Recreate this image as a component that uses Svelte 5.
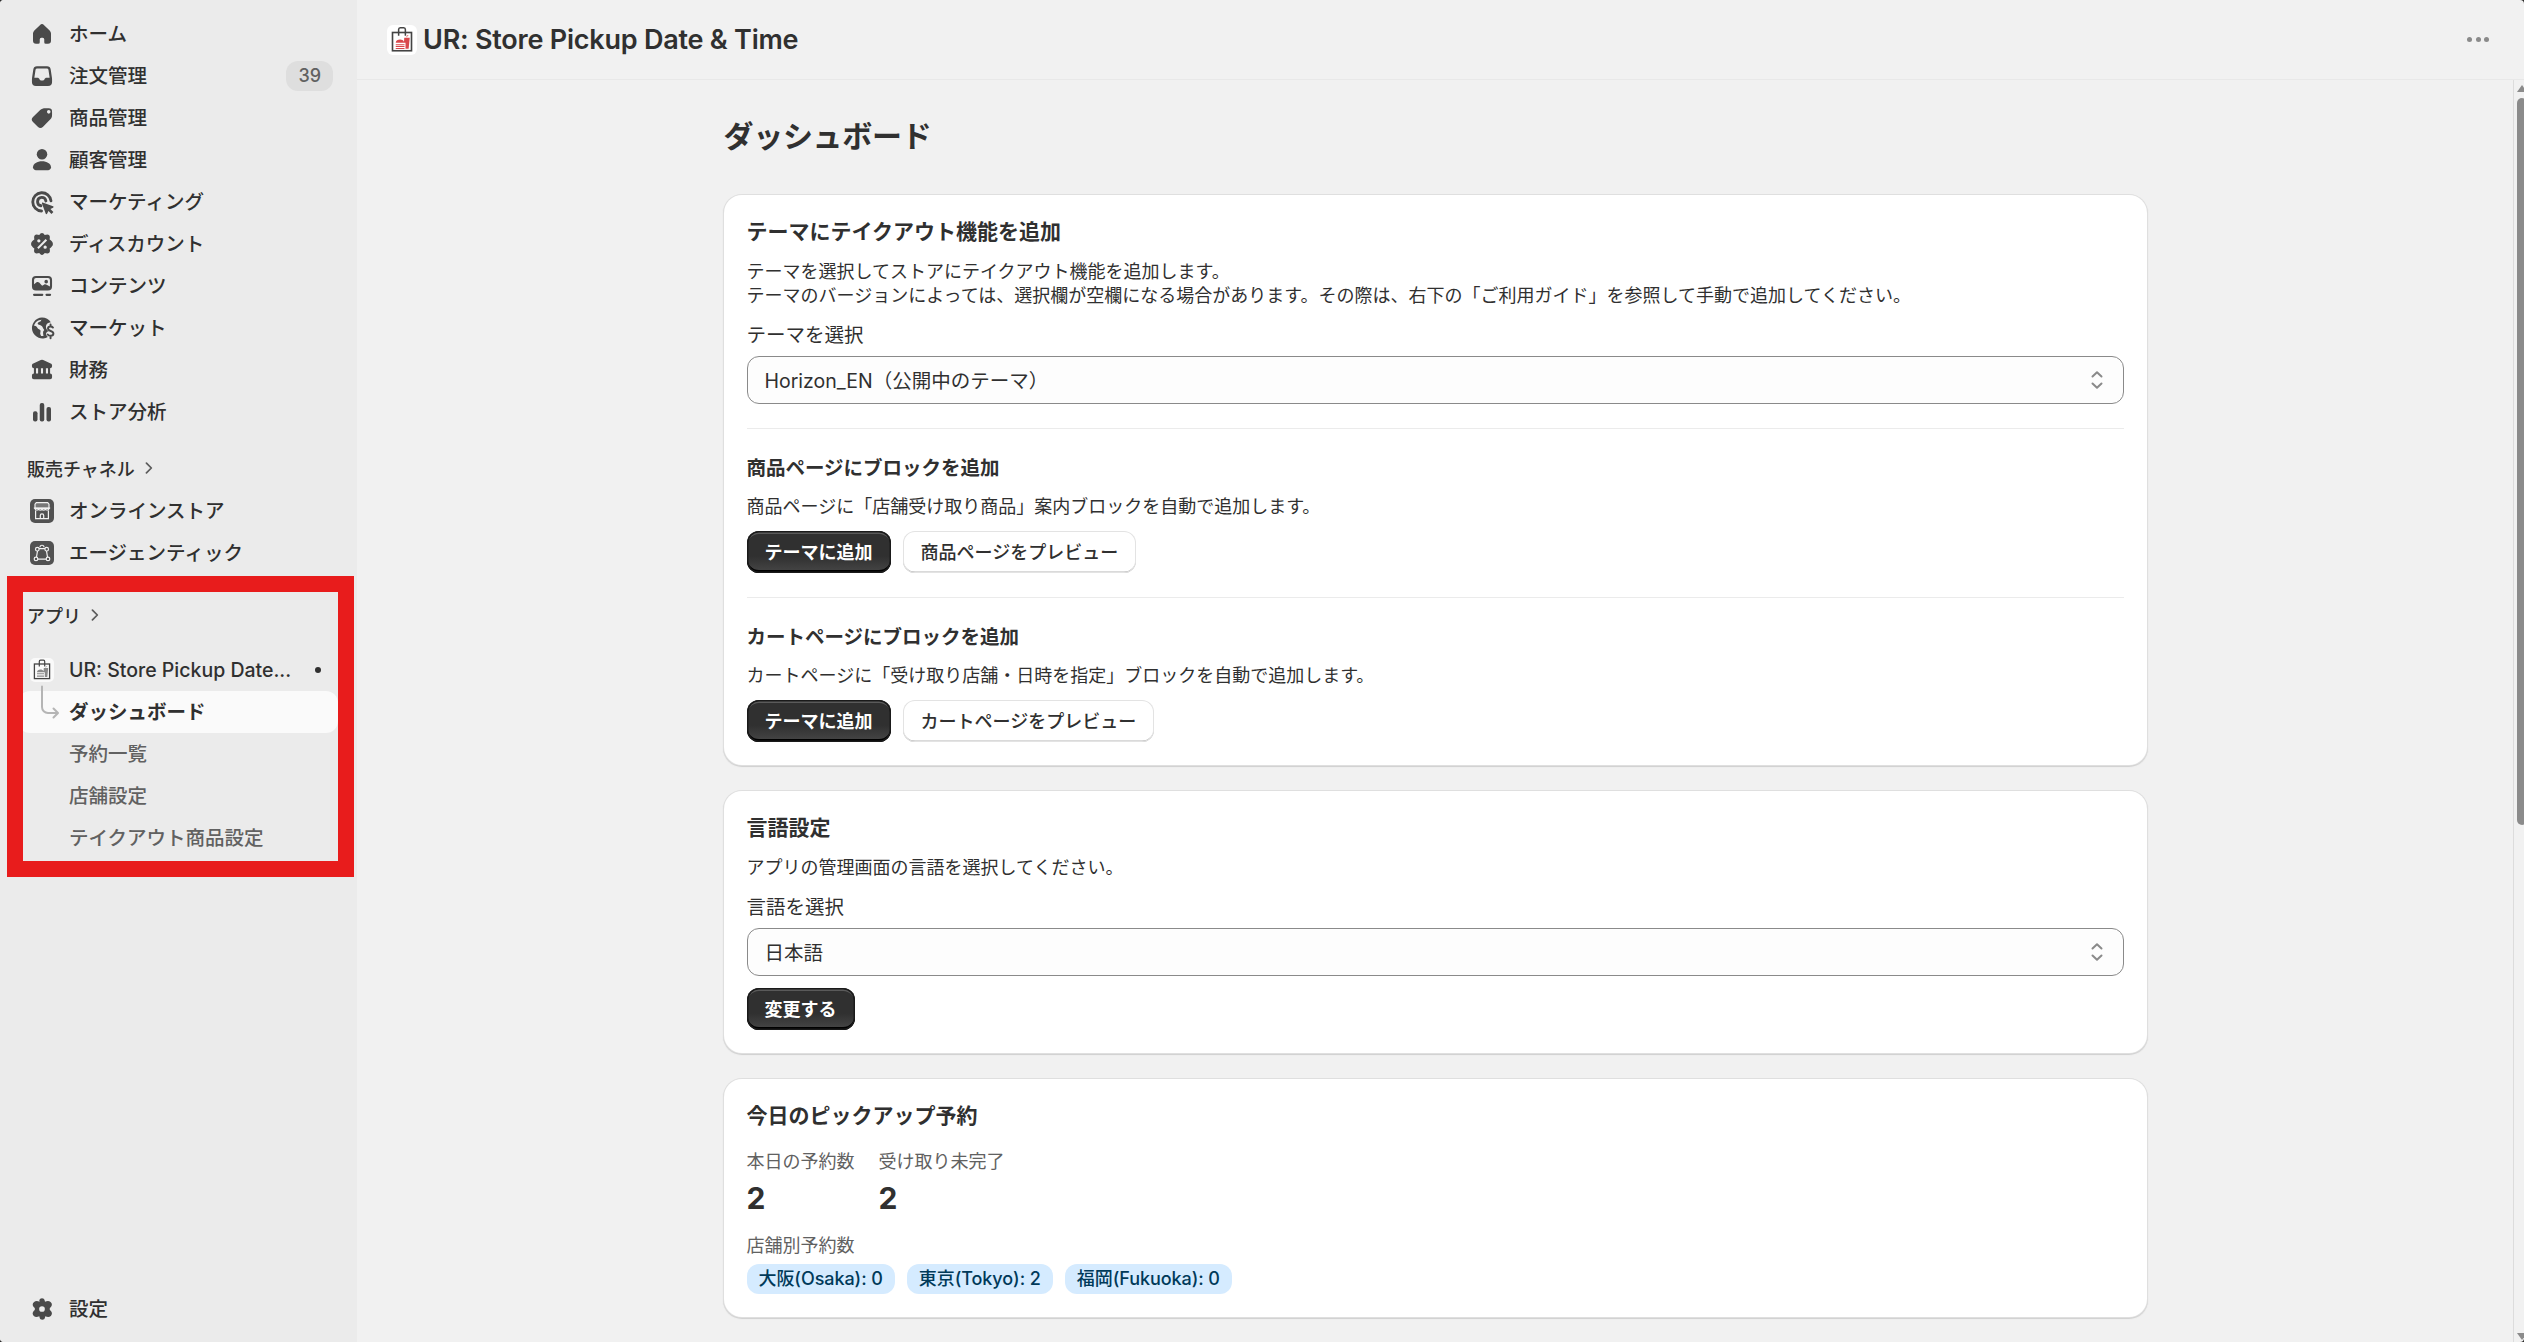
<script lang="ts">
  interface NavItem {
    label: string;
    icon: string;
    badge?: string;
  }

  interface BlockSection {
    title: string;
    text: string;
    preview: string;
  }

  // 20x20 glyphs, painted with currentColor
  const icons: Record<string, string> = {
    home: `<path fill-rule="evenodd" d="M8.6 4.1a2 2 0 0 1 2.8 0l3.7 3.5c.6.6.9 1.3.9 2.1v4.8a2 2 0 0 1-2 2h-1.5a1 1 0 0 1-1-1v-2a1 1 0 0 0-1-1h-1a1 1 0 0 0-1 1v2a1 1 0 0 1-1 1H6a2 2 0 0 1-2-2V9.700c0-.8.3-1.5.9-2.100z"/>`,
    orders: `<path fill-rule="evenodd" d="M6.700 3.500h6.600a2.500 2.500 0 0 1 2.500 2.100l.9 6v2.400a2.700 2.700 0 0 1-2.700 2.700H6a2.700 2.700 0 0 1-2.700-2.700v-2.400l.9-6a2.500 2.500 0 0 1 2.500-2.100zm.1 1.500c-.6 0-1 .4-1.100.9l-.8 5.200h2c.6 0 1 .3 1.300.8l.3.6c.2.400.5.500.9.500h1.200c.4 0 .7-.1.900-.5l.3-.6c.3-.5.7-.8 1.300-.8h2l-.8-5.200c-.1-.5-.5-.9-1.100-.9z"/>`,
    products: `<path fill-rule="evenodd" d="M12.200 3.500h2.300a2.200 2.200 0 0 1 2.200 2.200v2.600c0 1-.4 1.900-1.100 2.600l-4.900 4.900a2.500 2.500 0 0 1-3.500 0L4 12.700a2.300 2.300 0 0 1 0-3.300l4.800-4.700c.9-.8 2-1.200 3.400-1.200zm2.300 3.600a1.200 1.200 0 1 0 0-2.400 1.200 1.200 0 0 0 0 2.400z"/>`,
    customers: `<circle cx="10" cy="6.200" r="3.500"/><path d="M4 14.900c0-2.400 2.800-4 6-4s6 1.600 6 4c0 1.200-.9 1.900-2 1.900H6c-1.100 0-2-.7-2-1.900z"/>`,
    marketing: `<path d="M16 9.200A6.100 6.100 0 1 0 9.700 16" fill="none" stroke="currentColor" stroke-width="1.900" stroke-linecap="round"/><path d="M12.600 9.300a2.800 2.800 0 1 0-3.300 3.200" fill="none" stroke="currentColor" stroke-width="1.900" stroke-linecap="round"/><path d="M10.400 10.400l7 2.500c.4.200.4.700 0 .9l-1.800.9 2 2-1.300 1.300-2-2-.9 1.800c-.2.400-.7.400-.9 0l-2.600-7c-.1-.3.200-.5.500-.4z"/>`,
    discounts: `<path fill-rule="evenodd" d="M10 2.700c.8 0 1.300.6 1.800 1.300.9-.2 2.300-.6 3 .1s.4 1.800.3 2.900c.9.600 2.200 1.700 2.200 3s-1.300 2.300-2.200 3c.2 1 .4 2.200-.3 2.900s-2 .4-3 .1c-.5.700-1 1.300-1.800 1.300s-1.300-.6-1.800-1.300c-1 .3-2.300.6-3-.1s-.5-1.900-.3-2.900c-.9-.7-2.200-1.700-2.200-3s1.300-2.400 2.200-3c-.1-1.100-.4-2.200.3-2.900s2.100-.3 3-.1c.5-.7 1-1.300 1.800-1.300zM7.900 6.800a1.100 1.100 0 1 0 0 2.200 1.100 1.100 0 0 0 0-2.200zm4.200 4.200a1.100 1.100 0 1 0 0 2.200 1.100 1.100 0 0 0 0-2.200zm.3-4.300-5.600 5.700.9.900 5.700-5.600z"/>`,
    content: `<path fill-rule="evenodd" d="M6 3.300h8a2.700 2.700 0 0 1 2.700 2.700v4.300a2.700 2.700 0 0 1-2.700 2.700H6a2.700 2.700 0 0 1-2.700-2.700V6A2.700 2.700 0 0 1 6 3.300zM6 4.700A1.300 1.300 0 0 0 4.700 6v2.900l1.500-1.300c.6-.5 1.400-.4 1.900.1l2 2.200 1.200-.8c.6-.4 1.300-.3 1.800.1l2.200 1.200V6A1.300 1.300 0 0 0 14 4.700z"/><circle cx="12.800" cy="7.100" r="1.200"/><path d="M4.700 15.900h5.500M13 15.900h2.400" fill="none" stroke="currentColor" stroke-width="1.400" stroke-linecap="round"/>`,
    markets: `<path fill-rule="evenodd" d="M10 3c2.500 0 4.600 1.200 5.900 3.200-1.900.1-3.300 1.300-3.300 3 0 1.500.9 2.400 2 2.900-.9.100-1.900.8-1.900 1.800s.6 1.600 1.200 2.100A7 7 0 1 1 10 3zm-.2 1.500C7.300 4.600 5.300 6.200 4.700 8.500c1.300-.1 2 .6 2.300 1.500.3.800 1.700.7 2 1.700.2.800-.4 1.600-.1 2.400l.5 1.300h1.600c-.3-1.700-.6-2.900.5-4-1.200-1.400-.9-2.400-2.200-3-.9-.5-1.800-.3-2.100-1-.3-.8.500-1.300 1.200-1.500.9-.3.800-.9 1.400-1.400z"/><path d="M17.300 9.700c-.4-.5-.9-.7-1.600-.7-1.100 0-1.700.6-1.700 1.400 0 2 3.600 1.200 3.600 3.300 0 .9-.8 1.500-1.900 1.500-.8 0-1.500-.3-1.900-.9M15.700 7.700V9M15.700 15.400v1.400" fill="none" stroke="currentColor" stroke-width="1.300" stroke-linecap="round"/>`,
    finance: `<path fill-rule="evenodd" d="M9.200 3.400a2 2 0 0 1 1.600 0l5 2.200c.6.3.9.700.9 1.300v.6c0 .8-.6 1.300-1.300 1.300v3.500c.8 0 1.300.6 1.300 1.300v1.300c0 .8-.5 1.300-1.300 1.300H4.600c-.8 0-1.300-.5-1.300-1.300v-1.300c0-.7.5-1.300 1.300-1.300V8.800c-.7 0-1.300-.5-1.300-1.300v-.6c0-.6.300-1 .9-1.300zM6 8.800v3.500h1.400V8.800zm3.300 0v3.500h1.400V8.800zm3.300 0v3.500H14V8.800z"/>`,
    analytics: `<rect x="4" y="9.500" width="3" height="6.800" rx="1.300"/><rect x="8.500" y="4" width="3" height="12.300" rx="1.300"/><rect x="13" y="6.700" width="3" height="9.600" rx="1.300"/>`,
    settings: `<path fill-rule="evenodd" d="M8.200 4.300c.2-.9.900-1.500 1.800-1.500s1.600.6 1.800 1.500l.2.900c1.200-.5 2.500-.9 3.700.2 1.300 1.200 1.100 2.400.1 3.400l-.6.600v1.200l.6.600c1 1 1.200 2.200.1 3.400-1.200 1.100-2.500.7-3.700.2l-.2.900c-.2.900-.9 1.500-1.800 1.500s-1.600-.6-1.800-1.500l-.2-.9c-1.200.5-2.500.9-3.700-.2-1.100-1.200-.9-2.400.1-3.400l.6-.6V9.400l-.6-.6c-1-1-1.200-2.200.1-3.400C5.900 4.300 7.200 4.700 8.400 5.200zM10 8.100a1.900 1.900 0 1 0 0 3.800 1.900 1.900 0 0 0 0-3.800z"/>`,
  };

  // 24x24 tiles with light line art
  const channelIcons: Record<string, string> = {
    store: `<path d="M6.300 3.600h11.400l1.300 1.500v4.200H5V5.100z" fill="#777"/><path d="M3.800 9h16.400M5 9.500c0 2 3.500 2 3.500.2 0 1.800 3.500 1.800 3.500 0 0 1.800 3.500 1.800 3.500 0 0 1.800 3.500 1.800 3.500-.2M5.600 11.500v8.200h12.800v-8.200M10.300 19.500v-3c0-2.200 3.400-2.200 3.400 0v3"/>`,
    agentic: `<path d="M7.500 9.800 6.500 16M16.500 9.800l1 6.200M8 18.100h8M9 7.700h6"/><path d="M10 6.200c0-2.600 4-2.600 4 0"/><g fill="#525252"><circle cx="7.300" cy="8.200" r="1.800"/><circle cx="16.700" cy="8.200" r="1.800"/><circle cx="6" cy="17.900" r="1.800"/><circle cx="18" cy="17.900" r="1.800"/></g>`,
  };

  const navItems: NavItem[] = [
    { label: "ホーム", icon: "home" },
    { label: "注文管理", icon: "orders", badge: "39" },
    { label: "商品管理", icon: "products" },
    { label: "顧客管理", icon: "customers" },
    { label: "マーケティング", icon: "marketing" },
    { label: "ディスカウント", icon: "discounts" },
    { label: "コンテンツ", icon: "content" },
    { label: "マーケット", icon: "markets" },
    { label: "財務", icon: "finance" },
    { label: "ストア分析", icon: "analytics" },
  ];

  const channels: NavItem[] = [
    { label: "オンラインストア", icon: "store" },
    { label: "エージェンティック", icon: "agentic" },
  ];

  const appPages = [
    "ダッシュボード",
    "予約一覧",
    "店舗設定",
    "テイクアウト商品設定",
  ];

  const blocks: BlockSection[] = [
    {
      title: "商品ページにブロックを追加",
      text: "商品ページに「店舗受け取り商品」案内ブロックを自動で追加します。",
      preview: "商品ページをプレビュー",
    },
    {
      title: "カートページにブロックを追加",
      text: "カートページに「受け取り店舗・日時を指定」ブロックを自動で追加します。",
      preview: "カートページをプレビュー",
    },
  ];

  const stats = [
    { label: "本日の予約数", value: 2 },
    { label: "受け取り未完了", value: 2 },
  ];

  const stores = ["大阪(Osaka): 0", "東京(Tokyo): 2", "福岡(Fukuoka): 0"];

  let activePage = $state("ダッシュボード");
</script>

{#snippet appLogo(accent: string)}
  <svg viewBox="0 0 24 24" fill="none">
    <rect x="4.400" y="6" width="15.200" height="14.600" stroke="#444" stroke-width="1.300" />
    <path d="M9.300 8.600V3.500c0-.9.500-1.400 1.300-1.400h2.800c.8 0 1.300.5 1.300 1.400v5.100" stroke="#444" stroke-width="1.200" />
    <path
      d="M7 14.200c0-3 5.500-3.500 6.600-.9l.2-3.200h4.400l-.9 8.900h-2.500V14.200zM7 15.300h7v.8H7zM7 16.800h7v.8H7zM7 18.300h7v.8H7zM15.400 10l.5-1.600 1.500-.4"
      fill={accent}
    />
  </svg>
{/snippet}

{#snippet chevron()}
  <svg class="chevron" viewBox="0 0 12 12">
    <path d="M3.800 1.800 8 6l-4.200 4.200" />
  </svg>
{/snippet}

{#snippet select(value: string)}
  <button class="select">
    <span>{value}</span>
    <svg viewBox="0 0 14 20">
      <path d="M2.500 6.500 7 2.200l4.500 4.300M2.500 13.500 7 17.800l4.500-4.300" />
    </svg>
  </button>
{/snippet}

<div class="app">
  <aside class="sidebar">
    <nav>
      {#each navItems as item}
        <button class="nav-item">
          <svg class="nav-icon" viewBox="0 0 20 20" fill="currentColor">{@html icons[item.icon]}</svg>
          <span class="nav-label">{item.label}</span>
          {#if item.badge}
            <span class="count">{item.badge}</span>
          {/if}
        </button>
      {/each}

      <div class="nav-heading">販売チャネル {@render chevron()}</div>
      {#each channels as item}
        <button class="nav-item">
          <span class="tile">
            <svg viewBox="0 0 24 24">{@html channelIcons[item.icon]}</svg>
          </span>
          <span class="nav-label">{item.label}</span>
        </button>
      {/each}

      <div class="nav-heading apps">アプリ {@render chevron()}</div>
      <button class="nav-item app-item">
        <span class="tile light">{@render appLogo("#8a8a8a")}</span>
        <span class="nav-label">UR: Store Pickup Date...</span>
        <span class="dot"></span>
      </button>
      {#each appPages as page}
        <button
          class="nav-item sub"
          class:active={page === activePage}
          onclick={() => (activePage = page)}
        >
          {#if page === activePage}
            <svg class="branch" viewBox="0 0 20 36">
              <path d="M2 1.500v20.500a6 6 0 0 0 6 6h9M13.500 23.500l4.500 4.500-4.500 4.500" />
            </svg>
          {/if}
          <span class="nav-label">{page}</span>
        </button>
      {/each}
    </nav>
    <button class="nav-item">
      <svg class="nav-icon" viewBox="0 0 20 20" fill="currentColor">{@html icons.settings}</svg>
      <span class="nav-label">設定</span>
    </button>
    <div class="highlight"></div>
  </aside>

  <div class="main">
    <header class="topbar">
      <span class="logo">{@render appLogo("#d9484c")}</span>
      <span class="app-name">UR: Store Pickup Date &amp; Time</span>
      <button class="more" aria-label="その他">
        <i></i><i></i><i></i>
      </button>
    </header>

    <div class="body">
      <main class="page">
        <h1>ダッシュボード</h1>

        <section class="card">
          <h2>テーマにテイクアウト機能を追加</h2>
          <p>
            テーマを選択してストアにテイクアウト機能を追加します。<br />テーマのバージョンによっては、選択欄が空欄になる場合があります。その際は、右下の「ご利用ガイド」を参照して手動で追加してください。
          </p>
          <div class="label">テーマを選択</div>
          {@render select("Horizon_EN（公開中のテーマ）")}
          {#each blocks as block}
            <hr />
            <h3>{block.title}</h3>
            <p>{block.text}</p>
            <div class="actions">
              <button class="btn primary">テーマに追加</button>
              <button class="btn">{block.preview}</button>
            </div>
          {/each}
        </section>

        <section class="card">
          <h2>言語設定</h2>
          <p>アプリの管理画面の言語を選択してください。</p>
          <div class="label">言語を選択</div>
          {@render select("日本語")}
          <div class="actions">
            <button class="btn primary">変更する</button>
          </div>
        </section>

        <section class="card">
          <h2>今日のピックアップ予約</h2>
          <div class="stats">
            {#each stats as stat}
              <div>
                <div class="muted">{stat.label}</div>
                <div class="value">{stat.value}</div>
              </div>
            {/each}
          </div>
          <div class="muted">店舗別予約数</div>
          <div class="badges">
            {#each stores as store}
              <span class="badge">{store}</span>
            {/each}
          </div>
        </section>
      </main>

      <div class="scrollbar">
        <span class="arrow"></span>
        <span class="thumb"></span>
        <span class="arrow down"></span>
      </div>
    </div>
  </div>
</div>

<style>
  :global(body) {
    background: #2b2b2b;
  }

  .app {
    display: flex;
    height: 1342px;
    overflow: hidden;
    border-radius: 4px;
    background: #f1f1f1;
    color: #303030;
    font-family: Inter, "Noto Sans CJK JP", sans-serif;
    font-size: 19.5px;
    font-weight: 500;
  }

  button {
    border: 0;
    padding: 0;
    background: none;
    color: inherit;
    font: inherit;
    text-align: left;
    cursor: pointer;
  }

  .sidebar {
    position: relative;
    display: flex;
    flex-direction: column;
    justify-content: space-between;
    box-sizing: border-box;
    width: 357px;
    flex-shrink: 0;
    padding: 13px 19px 12px 18px;
    background: #ebebeb;
  }

  .nav-item {
    display: flex;
    align-items: center;
    box-sizing: border-box;
    width: 100%;
    height: 42px;
    padding: 0 6px 0 9px;
    border-radius: 12px;
    line-height: 30px;
  }

  .nav-icon {
    width: 30px;
    height: 30px;
    margin-right: 12px;
    color: #4a4a4a;
  }

  .nav-label {
    flex: 1;
    white-space: nowrap;
  }

  .count {
    padding: 0 12px;
    margin-right: -1px;
    border-radius: 12px;
    background: #dedede;
    color: #616161;
    font-size: 18px;
  }

  .nav-heading {
    display: flex;
    align-items: center;
    gap: 7px;
    box-sizing: border-box;
    height: 42px;
    margin-top: 15px;
    padding: 0 0 2px 9px;
    font-size: 18px;
  }

  .nav-heading.apps {
    margin: 21px 0 12px;
  }

  .chevron {
    width: 14px;
    height: 14px;
    fill: none;
    stroke: #5c5c5c;
    stroke-width: 1.5;
    stroke-linecap: round;
    stroke-linejoin: round;
  }

  .tile {
    width: 24px;
    height: 24px;
    margin: 0 15px 0 3px;
    border-radius: 5px;
    background: #525252;
  }

  .tile.light {
    background: #fafafa;
  }

  .tile svg,
  .logo svg {
    display: block;
    width: 100%;
    height: 100%;
  }

  .tile:not(.light) svg {
    fill: none;
    stroke: #f1f1f1;
    stroke-width: 1.2;
  }

  .dot {
    width: 6px;
    height: 6px;
    margin-right: 11px;
    border-radius: 50%;
    background: #303030;
  }

  .sub {
    position: relative;
    padding-left: 51px;
    color: #616161;
  }

  .sub.active {
    background: #fafafa;
    color: #303030;
    font-weight: 700;
  }

  .branch {
    position: absolute;
    left: 22px;
    top: -6px;
    width: 20px;
    height: 36px;
    fill: none;
    stroke: #b5b5b5;
    stroke-width: 2;
    stroke-linecap: round;
    stroke-linejoin: round;
  }

  .highlight {
    position: absolute;
    left: 7px;
    top: 576px;
    width: 315px;
    height: 269px;
    border: 16px solid #e81c1c;
    pointer-events: none;
  }

  .main {
    flex: 1;
    display: flex;
    flex-direction: column;
    min-width: 0;
  }

  .topbar {
    display: flex;
    align-items: center;
    height: 79px;
    padding: 0 35px 0 30px;
    border-bottom: 1px solid #e8e8e8;
  }

  .logo {
    width: 30px;
    height: 30px;
    margin-right: 6px;
    border-radius: 6px;
    background: #fff;
  }

  .app-name {
    flex: 1;
    font-size: 27px;
    font-weight: 600;
    letter-spacing: -0.23px;
  }

  .more {
    display: flex;
    gap: 3.5px;
  }

  .more i {
    width: 5px;
    height: 5px;
    border-radius: 50%;
    background: #8a8a8a;
  }

  .body {
    flex: 1;
    display: flex;
    min-height: 0;
  }

  .page {
    flex: 1;
    display: flex;
    flex-direction: column;
    align-items: center;
    font-weight: 400;
  }

  .page > * {
    box-sizing: border-box;
    width: 1423px;
  }

  h1,
  h2,
  h3,
  p {
    margin: 0;
  }

  h1 {
    margin: 37px 0 40px;
    font-size: 30px;
    line-height: 38px;
    letter-spacing: -0.3px;
  }

  .card {
    flex-shrink: 0;
    margin-bottom: 26px;
    padding: 25px 23px 23px;
    border-radius: 18px;
    background: #fff;
    box-shadow:
      0 0 0 1px #dfdfdf,
      0 1px 1px 1px #cfcfcf;
  }

  h2 {
    margin-bottom: 16px;
    font-size: 21px;
    line-height: 24px;
  }

  h3 {
    margin-bottom: 12px;
    font-size: 19.5px;
    line-height: 30px;
  }

  p {
    margin-bottom: 12px;
    font-size: 18px;
    line-height: 24px;
  }

  .label {
    margin-bottom: 6px;
    line-height: 30px;
  }

  .select {
    display: flex;
    align-items: center;
    justify-content: space-between;
    box-sizing: border-box;
    width: 100%;
    height: 48px;
    padding: 0 19px 0 17px;
    border: 1px solid #8a8a8a;
    border-radius: 12px;
    background: #fdfdfd;
  }

  .select span {
    padding-bottom: 2px;
  }

  .select svg {
    width: 14px;
    height: 20px;
    fill: none;
    stroke: #8a8a8a;
    stroke-width: 2;
    stroke-linecap: round;
    stroke-linejoin: round;
  }

  hr {
    height: 1px;
    margin: 24px 0;
    border: 0;
    background: #ebebeb;
  }

  .actions {
    display: flex;
    gap: 12px;
  }

  .select + .actions {
    margin-top: 12px;
  }

  .btn {
    height: 42px;
    padding: 0 18px 3px;
    border-radius: 12px;
    background: #fff;
    box-shadow:
      inset 0 0 0 1px #e3e3e3,
      inset 0 -1.5px 0 #b5b5b5;
    font-size: 18px;
    font-weight: 500;
  }

  .btn.primary {
    background: linear-gradient(#303030 60%, #474747);
    box-shadow:
      inset 0 0 0 1.5px #1a1a1a,
      inset 0 -3px 0 #000,
      inset 0 3px 0 #5a5a5a;
    color: #fff;
    font-weight: 700;
  }

  .stats {
    display: flex;
    gap: 24px;
    margin: 22px 0 18px;
  }

  .muted {
    color: #616161;
    font-size: 18px;
    line-height: 24px;
  }

  .value {
    margin-top: 6px;
    font-size: 30px;
    font-weight: 700;
    line-height: 36px;
  }

  .badges {
    display: flex;
    gap: 12px;
    margin-top: 6px;
  }

  .badge {
    padding: 0 12px;
    border-radius: 12px;
    background: #d5ebff;
    color: #003a5a;
    font-size: 18px;
    font-weight: 500;
    line-height: 30px;
    letter-spacing: -0.07px;
  }

  .scrollbar {
    display: flex;
    flex-direction: column;
    width: 7px;
    padding: 5px 0 2px 3px;
    border-left: 1px solid #dcdcdc;
    overflow: hidden;
  }

  .arrow {
    width: 10px;
    height: 7px;
    background: #8b8b8b;
    clip-path: polygon(50% 0, 100% 100%, 0 100%);
  }

  .thumb {
    width: 10px;
    height: 727px;
    margin-top: 6px;
    border-radius: 5px;
    background: #8b8b8b;
  }

  .arrow.down {
    margin-top: auto;
    transform: rotate(180deg);
  }
</style>
